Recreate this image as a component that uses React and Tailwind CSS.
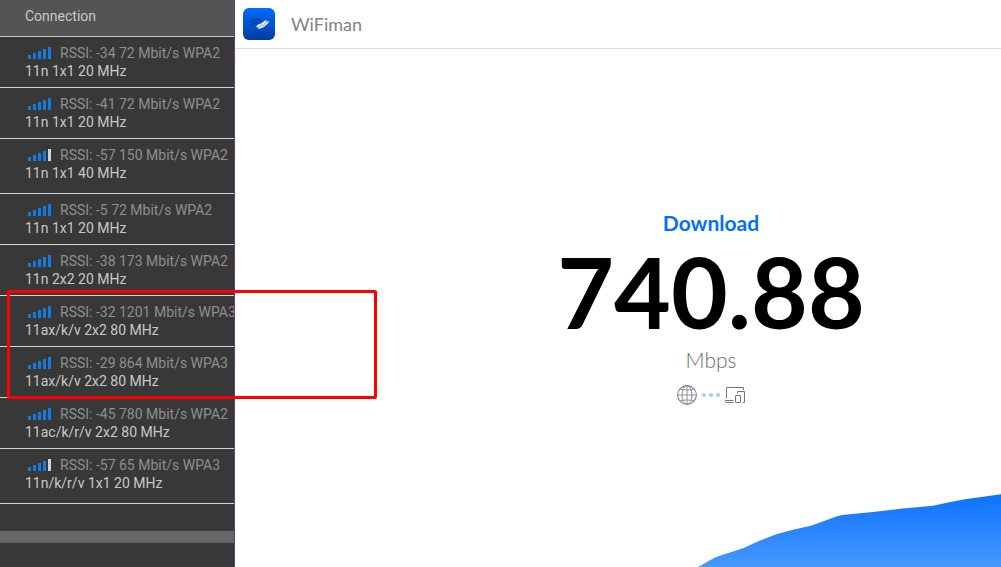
import React from 'react';

const clients = [
  { link: 'RSSI: -34 72 Mbit/s WPA2', mode: '11n 1x1 20 MHz', bars: 5 },
  { link: 'RSSI: -41 72 Mbit/s WPA2', mode: '11n 1x1 20 MHz', bars: 5 },
  { link: 'RSSI: -57 150 Mbit/s WPA2', mode: '11n 1x1 40 MHz', bars: 4, tall: true },
  { link: 'RSSI: -5 72 Mbit/s WPA2', mode: '11n 1x1 20 MHz', bars: 5 },
  { link: 'RSSI: -38 173 Mbit/s WPA2', mode: '11n 2x2 20 MHz', bars: 5 },
  { link: 'RSSI: -32 1201 Mbit/s WPA3', mode: '11ax/k/v 2x2 80 MHz', bars: 5 },
  { link: 'RSSI: -29 864 Mbit/s WPA3', mode: '11ax/k/v 2x2 80 MHz', bars: 5 },
  { link: 'RSSI: -45 780 Mbit/s WPA2', mode: '11ac/k/r/v 2x2 80 MHz', bars: 5 },
  { link: 'RSSI: -57 65 Mbit/s WPA3', mode: '11n/k/r/v 1x1 20 MHz', bars: 4, tall: true },
];

const barHeights = [4, 6, 8, 10, 12];

function Signal({ bars }) {
  return (
    <svg width="23" height="12" viewBox="0 0 23 12" shapeRendering="crispEdges" className="shrink-0" role="img" aria-label={`Signal ${bars} of 5`}>
      {barHeights.map((h, i) => (
        <rect key={h} x={i * 5} y={12 - h} width="3" height={h} fill={i < bars ? '#137be0' : '#d4d4d4'} />
      ))}
    </svg>
  );
}

function ClientRow({ client }) {
  return (
    <li className={`border-b border-[#d4d4d4] pt-[7px] pl-[25px] ${client.tall ? 'pb-[11px]' : 'pb-[7px]'}`}>
      <div className="flex h-[18px] items-center gap-[9px] overflow-hidden pl-[3px] whitespace-nowrap text-[#8f8f8f]">
        <Signal bars={client.bars} />
        <span>{client.link}</span>
      </div>
      <div className="h-[18px] whitespace-nowrap text-[#c8c8c8]">{client.mode}</div>
    </li>
  );
}

function AppLogo() {
  return (
    <svg width="32" height="32" viewBox="0 0 32 32" aria-hidden="true">
      <defs>
        <linearGradient id="logo-bg" x1="0" y1="0" x2="0" y2="1">
          <stop offset="0" stopColor="#006cff" />
          <stop offset="1" stopColor="#003c9e" />
        </linearGradient>
      </defs>
      <rect width="32" height="32" rx="6" fill="url(#logo-bg)" />
      <g fill="none" stroke="#04388f" strokeWidth="1.400" strokeLinecap="round">
        <path d="M6.800 14C9.500 11 14.500 10.500 18 12.600" />
        <path d="M9 17C11 14.600 13.500 14 16 14.800" />
      </g>
      <path d="M12.800 18.600L15.500 16.200L18.500 15.200L22 12.500L23.800 12L23 14L26 12.700L25.300 15L23 17.200L20.500 19.200L17 20.800L13.500 20.300L15.500 19.400Z" fill="#dfe9f8" />
      <path d="M15.500 19.200L19.500 16.500M19.500 18.500L23 14.500" stroke="#6c98dc" strokeWidth="0.700" />
    </svg>
  );
}

function GlobeIcon() {
  return (
    <svg width="20" height="20" viewBox="0 0 20 20" fill="none" stroke="#838491" aria-hidden="true">
      <circle cx="10" cy="10" r="9.400" strokeWidth="1.100" />
      <ellipse cx="10" cy="10" rx="5" ry="9.400" />
      <path d="M10 .6V19.400M.6 10H19.400M3 4C6 5.400 14 5.400 17 4M3 16C6 14.600 14 14.600 17 16" strokeWidth="0.900" />
    </svg>
  );
}

function DevicesIcon() {
  return (
    <svg width="20" height="17" viewBox="0 0 20 17" fill="none" stroke="#73747f" aria-hidden="true">
      <path d="M1.500 11.500V.5H18.500V3M8.500 13.500H.5V14.500Q.5 15.500 1.500 15.500H8.500" />
      <path d="M12.500 6.500V4.500H19.500V15.500H17.500" />
      <rect x="10.500" y="8.500" width="5" height="7" rx="0.500" />
    </svg>
  );
}

function ThroughputChart() {
  return (
    <svg width="303" height="73" viewBox="0 0 303 73" className="block" role="img" aria-label="Download throughput">
      <defs>
        <linearGradient id="area" x1="0" y1="0" x2="0" y2="1">
          <stop offset="0" stopColor="#0c73ff" />
          <stop offset="1" stopColor="#4898ff" />
        </linearGradient>
      </defs>
      <path d="M0 73L15 64.500L18 63L45 54.300L62 46.500L79 40L96 35.500L113 31.700L139 22.300L144 21L175 18L205 14.500L235 11.700L250 8.500L267 5.300L303 .3V73Z" fill="url(#area)" />
    </svg>
  );
}

export default function App() {
  return (
    <div className="relative flex min-h-screen overflow-hidden bg-white">
      <aside className="flex w-[235px] shrink-0 flex-col border-r border-[#742f9c] bg-[#383838] font-['Roboto',sans-serif] text-sm leading-[18px]">
        <h2 className="border-b border-[#c4c6cc] bg-[#545454] pt-[7px] pb-[11px] pl-[25px] text-[#c8c8c8]">Connection</h2>
        <ul>
          {clients.map((client) => (
            <ClientRow key={client.link} client={client} />
          ))}
        </ul>
        <div className="mt-[27px] h-3 bg-[#666666]" />
      </aside>

      <main className="flex min-w-0 flex-1 flex-col font-['Lato',sans-serif]">
        <header className="flex h-[49px] items-center gap-4 border-b border-[#dbdce6] px-2">
          <AppLogo />
          <h1 className="text-lg leading-[26px] text-[#80828a]">WiFiman</h1>
        </header>
        <section className="flex flex-col items-center pt-[160px] pl-[186px]">
          <h2 className="text-[21px] leading-7 font-bold text-[#006fff]">Download</h2>
          <p className="mt-1.5 text-[98px] leading-[96px] font-bold text-black">740.88</p>
          <p className="mt-[7px] text-[21px] leading-7 font-light text-[#6b6b6b]">Mbps</p>
          <div className="mt-[11px] flex items-center gap-[5px]">
            <GlobeIcon />
            <div className="flex gap-[3px]">
              <span className="size-1 rounded-full bg-[#a6caff]" />
              <span className="size-1 rounded-full bg-[#a6caff]" />
              <span className="size-1 rounded-full bg-[#a6caff]" />
            </div>
            <DevicesIcon />
          </div>
        </section>
        <div className="mt-auto self-end">
          <ThroughputChart />
        </div>
      </main>

      <div className="pointer-events-none absolute top-[290px] left-[7px] h-[109px] w-[370px] rounded-xs border-3 border-[#ff0000]" />
    </div>
  );
}
